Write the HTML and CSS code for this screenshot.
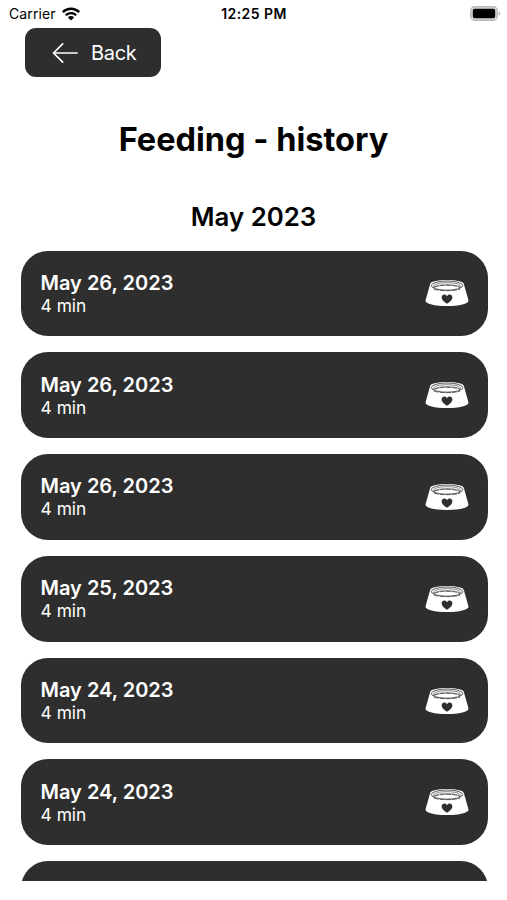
FILE: index.html
```html
<!DOCTYPE html>
<html lang="en">
<head>
<meta charset="utf-8">
<title>Feeding - history</title>
<link rel="stylesheet" href="styles.css">
</head>
<body>
<svg class="defs" aria-hidden="true">
  <symbol id="bowl" viewBox="0 0 44 28">
    <path d="M5 5.500C5 2.700 12 1 22 1s17 1.700 17 4.500L43.500 21.500C43.800 25 34 27 22 27S.2 25 .5 21.500Z" fill="#fff"/>
    <ellipse cx="22" cy="6.600" rx="15.800" ry="4.600" fill="none" stroke="#2e2e2e" stroke-width=".8"/>
    <path d="M8.500 8.200C7.500 5.500 13 3.700 22 3.700s14.500 1.800 13.500 4.500C32 6.300 28 5.700 22 5.700S12 6.300 8.500 8.200Z" fill="#fff" stroke="#555" stroke-width=".7"/>
    <path d="M9 8.600C12 7 16 6.300 22 6.300s10 .7 13 2.300M9 10.200c7 2 19 2 26 0" fill="none" stroke="#444" stroke-width=".8" stroke-dasharray="5 1"/>
    <path d="M22 24.700C19.500 23 16.600 20.800 16.600 18.400c0-3 4-4 5.400-1.200 1.400-2.800 5.400-1.800 5.400 1.200 0 2.400-2.900 4.600-5.400 6.300Z" fill="#2e2e2e"/>
  </symbol>
</svg>
<header class="status">
  <div class="carrier"><span>Carrier</span>
    <svg class="wifi" viewBox="0 0 18 14"><g fill="none" stroke="#000" stroke-width="2.300"><path d="M.8 5.100a11.700 11.700 0 0 1 16.400 0"/><path d="M3.800 8.300a7.400 7.400 0 0 1 10.400 0"/></g><path d="M9 13.500 5.900 10.400a4.400 4.400 0 0 1 6.200 0Z"/></svg>
  </div>
  <span class="time">12:25 PM</span>
  <svg class="battery" viewBox="0 0 31 15"><rect x=".8" y=".8" width="26.400" height="13.400" rx="4" fill="#ddd" stroke="#b8b8b8" stroke-width="1.500"/><rect x="2.800" y="2.800" width="22.400" height="9.400" rx="1.800"/><path d="M28.700 5.200q3 2.300 0 4.600Z" fill="#aaa"/></svg>
</header>
<button class="back">
  <svg class="arrow" viewBox="0 0 26 22"><path d="M25 11H1.500M10.700 1.800 1.500 11l9.200 9.200" fill="none" stroke="#fff" stroke-width="1.700" stroke-linecap="round" stroke-linejoin="round"/></svg>
  <span>Back</span>
</button>
<h1 class="title">Feeding - history</h1>
<h2 class="month">May 2023</h2>
<main class="list">
  <article class="card"><div><p class="date">May 26, 2023</p><p class="duration">4 min</p></div><svg class="bowl"><use href="#bowl"/></svg></article>
  <article class="card"><div><p class="date">May 26, 2023</p><p class="duration">4 min</p></div><svg class="bowl"><use href="#bowl"/></svg></article>
  <article class="card"><div><p class="date">May 26, 2023</p><p class="duration">4 min</p></div><svg class="bowl"><use href="#bowl"/></svg></article>
  <article class="card"><div><p class="date">May 25, 2023</p><p class="duration">4 min</p></div><svg class="bowl"><use href="#bowl"/></svg></article>
  <article class="card"><div><p class="date">May 24, 2023</p><p class="duration">4 min</p></div><svg class="bowl"><use href="#bowl"/></svg></article>
  <article class="card"><div><p class="date">May 24, 2023</p><p class="duration">4 min</p></div><svg class="bowl"><use href="#bowl"/></svg></article>
  <article class="card"></article>
</main>
</body>
</html>
```
FILE: styles.css
```css
* { box-sizing: border-box; }
body {
  margin: 0;
  height: 900px;
  overflow: hidden;
  background: #fff;
  color: #000;
  font-family: Inter, "Liberation Sans", sans-serif;
}
h1, h2, p { margin: 0; }
.defs { position: absolute; width: 0; height: 0; }
.status {
  display: grid;
  grid-template-columns: 1fr auto 1fr;
  align-items: center;
  height: 27px;
  padding: 0 6px 0 9px;
}
.carrier { display: flex; align-items: center; gap: 6px; font-size: 14px; letter-spacing: 0.1px; }
.wifi { width: 18px; height: 14px; }
.time { font-size: 14px; font-weight: 600; letter-spacing: 0.450px; margin-left: -2px; }
.battery { width: 31px; height: 15px; justify-self: end; }
.back {
  display: flex;
  align-items: center;
  gap: 13px;
  width: 136px;
  height: 49px;
  margin: 1px 0 0 25px;
  padding: 0 0 0 27px;
  border: 0;
  border-radius: 11px;
  background: #2e2e2e;
  color: #fff;
  font: 400 20px/49px Inter, "Liberation Sans", sans-serif;
  letter-spacing: -0.300px;
}
.back span { padding-top: 1px; }
.arrow { width: 26px; height: 22px; }
.title { margin-top: 43px; font-size: 32.500px; line-height: 40px; font-weight: 700; text-align: center; }
.month { margin-top: 41px; font-size: 25.800px; line-height: 32px; font-weight: 600; text-align: center; }
.list {
  display: flex;
  flex-direction: column;
  gap: 16px;
  height: 630px;
  margin-top: 17.500px;
  padding: 0 19.500px 0 20.500px;
  overflow: hidden;
}
.card {
  display: flex;
  flex: none;
  align-items: center;
  justify-content: space-between;
  height: 85.800px;
  padding: 0 19px 0 20px;
  border-radius: 27px;
  background: #2e2e2e;
  color: #fff;
}
.date { font-size: 20px; line-height: 24px; font-weight: 600; }
.duration { font-size: 17.400px; line-height: 22px; }
.card > div { padding-top: 1px; }
.bowl { width: 44px; height: 28px; }
```
